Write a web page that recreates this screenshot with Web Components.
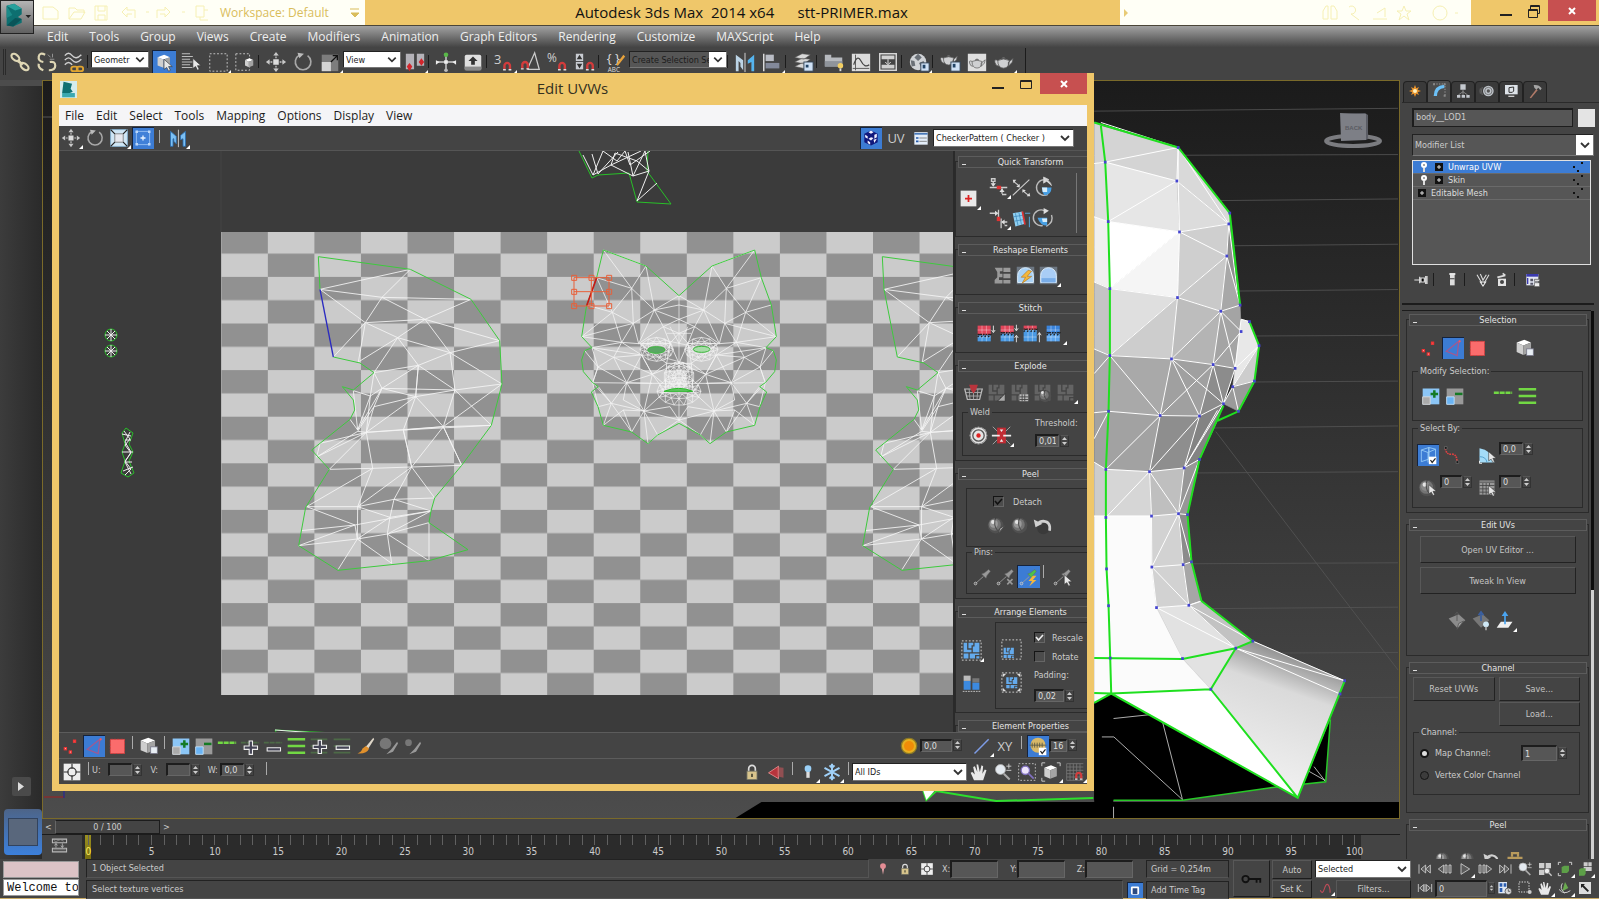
<!DOCTYPE html>
<html lang="en">
<head>
<meta charset="utf-8">
<title>Autodesk 3ds Max 2014 x64</title>
<style>
  body { margin: 0; background: #444; }
</style>
</head>
<body>
<max-app></max-app>
<script>
/** Shared rules, put in front of each element's own styles. */
const BASE = `
  *, *::before { box-sizing: border-box; }
  button, input, select { font: inherit; color: inherit; margin: 0; padding: 0; border: 0; background: none; border-radius: 0; }
  svg { display: block; }
  .row { display: flex; align-items: center; }
  .push { margin-left: auto; }
`;

function define(tag, css, html, setup) {
  customElements.define(tag, class extends HTMLElement {
    connectedCallback() {
      if (this.shadowRoot) return;
      const root = this.attachShadow({ mode: 'open' });
      root.innerHTML = `<style>${BASE}${css}</style>${typeof html === 'function' ? html(this) : html}`;
      if (setup) setup(this, root);
    }
  });
}

/* ---------- icons, all on a 24 x 24 grid ---------- */

const cursor = (x, y) => `<path transform="translate(${x} ${y})" d="M0 0v11l3-2 2 4 2-1-2-4h4z" fill="#e8e8e8" stroke="#333" stroke-width=".7"/>`;
const magnet = (x, y) => `<g transform="translate(${x} ${y})" fill="none"><path d="M1.500 8V4a3 3 0 0 1 6 0v4" stroke="#d23c3c" stroke-width="2.600"/><path d="M0 8.500h3M6 8.500h3" stroke="#ddd" stroke-width="1.600"/></g>`;
const teapot = (x, y, s) => `<g transform="translate(${x} ${y}) scale(${s})"><path d="M4 6q0 8 6 8t6-8q-6-3-12 0zM15 8l5-4-1 4-4 4zM4 6Q0 4 1 8t4 4M8 4q2-2 4 0z" fill="#cfd0d2" stroke="#555" stroke-width=".8"/></g>`;
const cube = (x, y, s = 1) => `<g transform="translate(${x} ${y}) scale(${s})"><path d="M0 3l8-3 7 3-8 3z" fill="#fff"/><path d="M0 3l7 3v10l-7-3z" fill="#cfcfcf"/><path d="M7 6l8-3v10l-8 3z" fill="#a4a4a4"/></g>`;
const sphere = (x, y, r, c = '#9a9a9a') => `<circle cx="${x}" cy="${y}" r="${r}" fill="#505050"/><circle cx="${x - 1}" cy="${y - 1}" r="${r - 2}" fill="#747474"/><circle cx="${x - 2}" cy="${y - 2}" r="${r - 4.5}" fill="${c}"/><circle cx="${x - 3}" cy="${y - 4}" r="${r / 4}" fill="#e4e4e4"/><path d="M${x} ${y - r}q-3 ${r} 2 ${r * 1.6}" stroke="#3a3a3a" fill="none"/>`;
const blocks = (x, y, s, c) => `<g transform="translate(${x} ${y}) scale(${s})" fill="${c}"><path d="M0 0h4v8h5v3H0zM5.500 0H11v3H9v3.500H5.500zM12.500 0H18v11h-7.500V4.500h2zM0 12.500h5.500V18H0zM7 12.500h11V14h-5v4H7zM14.500 15.500H18V18h-3.500z"/></g>`;
const stitch = (top, bottom, split, arrow) => `<path d="M3 3h15v${split - 3}H3z" fill="${top}"/><path d="M3 ${split}h15v${21 - split}H3z" fill="${bottom}"/>
  <path d="M8 3v18M13 3v18M3 8h15M3 16h15" stroke="#ffffff66"/><path d="M3 ${split + 2}l3-3M7 ${split + 2}l3-3M11 ${split + 2}l3-3M15 ${split + 2}l3-3M3 ${split - 1}h16" stroke="#222" stroke-width="1.400" stroke-dasharray="2 1"/>
  <path d="${arrow}" fill="none" stroke="#eee"/>`;
const pin = (c) => `<path d="M4 20L13 12" stroke="#999" fill="none"/><path d="M11 9l3-1 5-4 2 2-4 5-1 3z" fill="${c}" stroke="#666" stroke-width=".6"/><circle cx="4" cy="20" r="1.500" fill="none" stroke="#ccc"/>`;
const transport = (d) => `<path d="${d}" fill="#5a5a5a" stroke="#d8d8d8" stroke-width="1.200"/>`;

const ICONS = {
  link: `<g fill="none" stroke="#ded6b4" stroke-width="2.400"><ellipse cx="7" cy="7" rx="5" ry="3" transform="rotate(40 7 7)"/><path d="M9 10l6 5" stroke-width="3"/><ellipse cx="17" cy="17" rx="5" ry="3" transform="rotate(40 17 17)"/></g>`,
  unlink: `<g fill="none" stroke="#ded6b4" stroke-width="2.400"><path d="M10 4Q4 1 3 6t5 6M14 21q7 0 7-5t-6-4M3 14q-1 5 5 7"/></g><path d="M13 4l3 3M18 3v4M15 9h5" stroke="#999"/>`,
  waves: `<g fill="none" stroke="#cfcfcf" stroke-width="1.600"><path d="M2 5q4-5 8 0t10-1M2 10q4-5 8 0t10-1M2 15q4-5 8 0"/></g><g fill="none" stroke="#e0a430" stroke-width="2"><rect x="9" y="17" width="7" height="5" rx="2.500"/><rect x="15" y="17" width="7" height="5" rx="2.500"/></g>`,
  pick: `${cube(5, 4, 0.9)}${cursor(12, 9)}`,
  list: `<path d="M2 3h9M2 6h12M2 9h9M2 12h12M2 15h9M2 18h12" stroke="#bdbdbd" stroke-width="1.300"/>${cursor(14, 8)}`,
  region: `<rect x="3" y="3" width="19" height="19" fill="none" stroke="#ccc" stroke-dasharray="2 2"/>`,
  crossing: `<rect x="2" y="3" width="15" height="18" fill="none" stroke="#ccc" stroke-dasharray="2 2"/>${cube(12, 8, 0.6)}`,
  move: `<path d="M12 3v5M12 16v5M3 12h5M16 12h5" stroke="#c8c8c8" stroke-dasharray="2 1" stroke-width="1.400"/><path d="M12 1l3 4H9zM12 23l3-4H9zM1 12l4-3v6zM23 12l-4-3v6z" fill="#c8c8c8"/><rect x="9" y="9" width="6" height="6" fill="#ddd"/>`,
  rotate: `<path d="M8 4.500A8.500 8.500 0 1 0 17 5" fill="none" stroke="#a8a8a8" stroke-width="1.800"/><path d="M6 2l7 1-5 5z" fill="#bbb"/>`,
  scale: `<path d="M3 4h18v18H3z" fill="#7d7d7d"/><path d="M3 12h10v10H3z" fill="#d4d4d4"/><path d="M13 12l7-7M20 10V5h-5" stroke="#111" fill="none" stroke-width="1.400"/>`,
  pivot: `<path d="M2 3h9v17H2zM14 3h8v13h-8z" fill="#b4b2b8"/><path d="M6 13l3 4-3 5-3-5zM19 8l3 4-3 4-3-4z" fill="#d3262c"/>`,
  manip: `<path d="M12 4v16M3 12h18" stroke="#ccc" stroke-width="1.600"/><circle cx="12" cy="4" r="2.500" fill="#59b948"/><path d="M10 10h4v4h-4zM1 10l4 2-4 3zM23 10l-4 2 4 3z" fill="#eee"/><circle cx="12" cy="21" r="2" fill="#bbb"/>`,
  keys: `<rect x="3" y="4" width="18" height="17" rx="2" fill="#dfdfdf"/><rect x="3" y="17" width="18" height="4" fill="#8b8b8b"/><path d="M12 6l5 5h-3v4h-4v-4H7z" fill="#333"/>`,
  snap: `<text x="1" y="14" font-size="14" fill="#d0d0d0">3</text>${magnet(11, 12)}`,
  angle: `<path d="M8 20L16 2l5 18H8" fill="none" stroke="#ccc" stroke-width="1.400"/>${magnet(1, 11)}`,
  percent: `<text x="0" y="12" font-size="13" fill="#d0d0d0">%</text>${magnet(12, 12)}`,
  spinner: `<rect x="2" y="3" width="8" height="8" fill="#c9ccd2"/><rect x="2" y="12" width="8" height="8" fill="#c9ccd2"/><path d="M6 4l3 5H3zM6 19l3-5H3z" fill="#333"/>${magnet(13, 12)}`,
  named: `<text x="2" y="13" font-size="14" fill="#ddd">{ }</text><text x="3" y="23" font-size="7" fill="#ddd">ABC</text><path d="M12 15l8-11 2 2-8 10z" fill="#e8a33c"/>`,
  mirror: `<path d="M2 4l8 6v11l-3-4v-4l-2-2v11H2z" fill="#bcd4e6"/><path d="M22 4l-7 6v4l4-2v10h3z" fill="#55b4ee"/><path d="M12 2v21" stroke="#ddd"/>`,
  align: `<path d="M3 3v19" stroke="#ddd" stroke-width="1.600"/><path d="M5 4h9v7H5z" fill="#b9bcc4"/><path d="M5 13h15v6H5z" fill="#83899a"/>`,
  layers: `<path d="M3 7l8-4 9 1-7 5zM3 12l8-4 9 1-7 5zM3 17l8-4 9 1-7 5z" fill="#d9d9d9" stroke="#555" stroke-width=".6"/><rect x="13" y="12" width="10" height="10" fill="#cfe1f5" stroke="#345"/><path d="M15 15h3v3h-3z" fill="#246"/>`,
  ribbon: `<path d="M2 4h7v3h12v10H2z" fill="#b6b9be"/><path d="M2 11h19v6H2z" fill="#8f949b"/><circle cx="19" cy="16" r="3" fill="#f3cf62"/><path d="M18 19h2v3h-2z" fill="#ddd"/>`,
  curve: `<rect x="2" y="3" width="20" height="19" fill="#dcdcdc"/><path d="M6 4v17M3 19h18" stroke="#555"/><path d="M4 15q4-12 8-4t9 4" fill="none" stroke="#444" stroke-width="1.300"/>`,
  schematic: `<rect x="3" y="3" width="18" height="18" fill="#454545" stroke="#d8d8d8" stroke-width="1.600"/><path d="M5 5h14v4H5zM5 15h14v4H5z" fill="#d0d0d0"/><path d="M12 9v5M9 12l3 3 3-3" stroke="#eee" fill="none"/>`,
  material: `<circle cx="11" cy="12" r="9" fill="#d0d3d7"/><path d="M11 3l4 4-4 4-4-4zM3 10l4 1 1 5-4 1zM12 13l5-2 2 5-4 3z" fill="#6a7077"/><rect x="14" y="13" width="9" height="9" fill="#cfe1f5" stroke="#345"/><path d="M16 15h3v4h-3z" fill="#246"/>`,
  rsetup: `${teapot(1, 2, 0.95)}<rect x="13" y="12" width="10" height="10" fill="#cfe1f5" stroke="#345"/><path d="M15 14h3v4h-3z" fill="#246"/>`,
  rframe: `<rect x="2" y="3" width="20" height="19" fill="#dedede"/>${teapot(3, 6, 0.9)}`,
  render: teapot(1, 4, 1.05),
  mirror2: `<path d="M3 4l7 6v9l-3-3v-3l-1 0v9H3z" fill="#7cc0f4" stroke="#2a6db0"/><path d="M21 4l-6 5v5l3-1v9h3z" fill="#7cc0f4" stroke="#2a6db0"/><path d="M12.500 2v21" stroke="#ddd"/>`,
  scaleb: `<rect x="2" y="2" width="20" height="20" fill="#cfe6f5" stroke="#8ab8d8"/><rect x="7" y="7" width="10" height="10" fill="#e6e8ee" stroke="#777"/><path d="M2 2l5 5M22 2l-5 5M2 22l5-5M22 22l-5-5" stroke="#222" stroke-width="1.500"/>`,
  freeform: `<rect x="4" y="4" width="16" height="16" fill="#4080d8" stroke="#9cc4f6"/><path d="M3 3h3v3H3zM18 3h3v3h-3zM3 18h3v3H3zM18 18h3v3h-3z" fill="#bcd8fa"/><path d="M12 9v6M9 12h6" stroke="#e8f2ff" stroke-width="1.600"/>`,
  checker: `<path d="M4 7l8-4 8 4v10l-8 4-8-4z" fill="#10187c"/><path d="M9 5l3 2 3-2-3-2zM5 8l3 2v3l-3-2zM12 11l3 1-3 3-3-2zM16 8l3-1v4l-3 2zM8 15l3 2v3l-3-2zM15 14l4-1-3 5z" fill="#f0f0ff"/>`,
  props: `<rect x="4" y="5" width="16" height="15" fill="#e4eefa"/><path d="M4 7h16" stroke="#4878b8" stroke-width="2"/><path d="M6 12h3M6 16h3" stroke="#2458a8" stroke-width="2"/><path d="M10 12h9M10 16h9" stroke="#777"/>`,
  center: `<rect x="3" y="3" width="18" height="18" fill="#e8e8e8"/><path d="M12 8v8M8 12h8" stroke="#d22" stroke-width="2"/>`,
  alignv: `<path d="M4 2h4v3H4zM6 5v5M2 12h20M16 13v6M16 20h5" stroke="#ccc" stroke-width="1.500" fill="none"/><path d="M6 11l-3-4h6zM16 13l3 4h-6z" fill="#ddd"/><path d="M10 10h5v4h-5z" fill="#d33"/>`,
  alignh: `<path d="M12 2v10M15 12v11M2 6h7M22 16h-6M19 20h3" stroke="#ccc" stroke-width="1.500"/><path d="M12 6L8 3v6zM15 16l4-3v6z" fill="#ddd"/><path d="M10 10h4v5h-4z" fill="#d33"/>`,
  linear: `<path d="M2 21L21 3M3 5l6 5M14 16l6 5" stroke="#ccc" stroke-width="1.300"/><path d="M2 3h4L3 7zM22 22h-4l3-4zM10 12V8L6 11zM13 14v4l4-3z" fill="#ddd"/>`,
  rotcw: `<path d="M12 3a9 9 0 1 0 4 17" fill="none" stroke="#bbb" stroke-width="1.600"/><path d="M11 0l6 3-6 4zM12 3a9 9 0 0 1 8 7" fill="#ddd" stroke="#ccc"/><path d="M9 12h11q0 8-8 9-3-4-3-9z" fill="#48a0e4"/><path d="M9 12h6v5h-5z" fill="#d8eefb"/>`,
  rotccw: `<path d="M12 3a9 9 0 1 0-2 17M20 8q3 8-6 13" fill="none" stroke="#bbb" stroke-width="1.600"/><path d="M11 0l6 3-6 4z" fill="#ddd"/><path d="M4 11h11v9q-8 0-11-9z" fill="#48a0e4"/><path d="M9 12h6v4h-5z" fill="#d8eefb"/>`,
  edgealign: `<path d="M2 6l11-2 3 14-11 3z" fill="#8fd0f2"/><path d="M5 6l3 14M9 5l3 14M3 10l12-2M4 15l12-2" stroke="#3a84b8" stroke-width=".8"/><path d="M13 4l3 15" stroke="#d33" stroke-width="2"/><path d="M16 6h6M21 10v12" stroke="#5ab4ee"/>`,
  spaceh: `<path d="M8 6L3 9l5 3zM8 8h16v2H8zM6 15h2v2H6zM10 15h2v2h-2zM14 15h3v2h-3z" fill="#ccc"/>`,
  spacev: `<path d="M9 2h3v3H9zM9 8h3v2H9zM9 13h3v2H9zM9 18h3v3H9z" fill="#ccc"/>`,
  straighten: `<path d="M3 3h9v4H9v3h3v4H8v3h4v4H3v-4l3-3V8zM13 3h8v5h-8zM13 10h8v5h-8zM13 17h8v4h-8z" fill="#999"/>`,
  relaxl: `<rect x="2" y="2" width="20" height="20" fill="#6d7782"/><path d="M3 20V12a9 9 0 0 1 18 0v8z" fill="#a9d2f6" stroke="#e4f2fd"/><path d="M15 6l-8 8h5l-4 7 11-8h-5l5-6z" fill="#f4b73c" stroke="#a86a10" stroke-width=".6"/>`,
  relax: `<rect x="2" y="2" width="20" height="20" fill="#6d7782"/><path d="M3 20V12a9 9 0 0 1 18 0v8z" fill="#a9cdf6" stroke="#e4f2fd"/><path d="M4 15h16v5H4z" fill="#79ade8"/>`,
  st1: stitch('#e0465a', '#4a9ae4', 14, 'M21 3v7M19 8l2 3 2-3'),
  st2: stitch('#e0465a', '#4a9ae4', 12, 'M21 2v6M19 6l2 3 2-3M21 22v-7M19 17l2-3 2 3'),
  st3: stitch('#e0465a', '#4a9ae4', 8, 'M21 22V11M19 14l2-3 2 3'),
  st4: stitch('#3a84dc', '#5aa4ee', 12, 'M0 0'),
  basket: `<path d="M2 8h20l-3 12H5z" fill="none" stroke="#bbb" stroke-width="1.400"/><path d="M7 8l1 12M12 8v12M17 8l-1 12M3 12h18M4 16h16" stroke="#aaa"/><path d="M7 3h10l-2 6-3 4-3-4z" fill="#b8343c"/>`,
  ex1: blocks(3, 3, 1, '#646464') + `<path d="M22 13v9h-9z" fill="#aaa" stroke="#333"/>`,
  ex2: blocks(3, 3, 1, '#646464') + `<path d="M12 14h10v8H12z" fill="#bbb"/><path d="M15 14v8M18 14v8M12 17h10M12 20h10" stroke="#444"/>`,
  ex3: blocks(3, 3, 1, '#646464') + sphere(15, 16, 7),
  ex4: blocks(3, 3, 1, '#646464'),
  target: `<circle cx="12" cy="12" r="10" fill="#e4e4e4"/><circle cx="12" cy="12" r="6.500" fill="none" stroke="#555" stroke-width="1.500"/><circle cx="12" cy="12" r="9.500" fill="none" stroke="#777"/><circle cx="12" cy="12" r="2.500" fill="#d22"/>`,
  weld: `<path d="M2 2l20 20M22 2L2 22" stroke="#aaa"/><path d="M7 3h10v18H7z" fill="#c22c34"/><path d="M10 5l2 3 2-3M10 19l2-3 2 3" fill="#eee"/><path d="M1 12h9M23 12h-9" stroke="#eee" stroke-width="2"/>`,
  peel1: sphere(11, 12, 9) + `<path d="M22 12l-8 9 2-6z" fill="#aaa" stroke="#444"/>`,
  peel2: sphere(12, 12, 9),
  undo: `<circle cx="13" cy="15" r="7" fill="#3a3a3a"/><path d="M20 18q2-10-7-11-4 0-6 3" fill="none" stroke="#d0d0d0" stroke-width="3"/><path d="M2 5l2 9 8-4z" fill="#d0d0d0"/>`,
  pin: pin('#999'),
  pinx: pin('#999') + `<path d="M14 15l6 6M20 15l-6 6" stroke="#999" stroke-width="1.800"/>`,
  pinauto: pin('#4cc24a') + `<path d="M17 11l-5 6h4l-3 6 8-7h-4l4-5z" fill="#f6b83c"/>`,
  pinsel: pin('#999') + cursor(14, 10),
  pack: `<rect x="1" y="1" width="22" height="22" fill="none" stroke="#ddd" stroke-dasharray="2 2"/>${blocks(3, 3, 1, '#64aaec')}`,
  packsmall: `<rect x="1" y="1" width="22" height="22" fill="none" stroke="#ddd" stroke-dasharray="2 2"/>${blocks(3, 10, 0.65, '#64aaec')}`,
  packfit: `<rect x="1" y="1" width="22" height="22" fill="none" stroke="#ddd" stroke-dasharray="2 2"/>${blocks(6, 6, 0.7, '#64aaec')}<path d="M2 2h4L2 6zM22 2h-4l4 4zM2 22h4l-4-4zM22 22h-4l4-4z" fill="#ddd"/>`,
  cabinets: `<path d="M3 3h8v6H3z" fill="#bbb"/><path d="M13 6h8v5h-8z" fill="#777"/><path d="M3 9h8v10H3zM13 11h8v8h-8z" fill="#3c8ae0"/><path d="M2 21h21" stroke="#ccc" stroke-dasharray="2 1"/>`,
  points: `<g fill="#fff" stroke="#e33" stroke-width="1.500"><rect x="4" y="14" width="2.500" height="2.500"/><rect x="10" y="18" width="2.500" height="2.500"/><rect x="15" y="5" width="2.500" height="2.500"/></g>`,
  edge: `<path d="M19 4L4 16l13 5z" fill="none" stroke="#a05a90" stroke-width="1.600"/><circle cx="20" cy="4" r="1.300" fill="#f55"/>`,
  face: `<rect x="4" y="4" width="17" height="17" fill="#fb6c6c" stroke="#e03c3c" stroke-dasharray="3 1"/>`,
  element: `${cube(2, 2, 1.15)}<rect x="14" y="13" width="8" height="8" fill="#e8eef4" stroke="#778"/>`,
  grow: `<rect x="2" y="3" width="20" height="19" fill="#8cc6f6"/><path d="M2 13h9v9H2z" fill="#aaa" stroke="#ddd"/><path d="M16 5v9M11.500 9.500h9" stroke="#147a24" stroke-width="3"/>`,
  shrink: `<rect x="2" y="3" width="20" height="19" fill="#9a9a9a"/><path d="M2 13h9v9H2z" fill="#6ab4f4" stroke="#c8e4fb"/><path d="M12 9.500h9" stroke="#147a24" stroke-width="3"/>`,
  loop: `<path d="M1 8h22" stroke="#72d844" stroke-width="3" stroke-dasharray="6 1"/>`,
  loopadd: `<path d="M1 8h22" stroke="#4d6a47" stroke-width="2" stroke-dasharray="6 1"/><path d="M11 6h4v6h6v4h-6v6h-4v-6H5v-4h6z" fill="#445" stroke="#eee" stroke-width="1.300"/>`,
  loopsub: `<path d="M1 8h22" stroke="#4d6a47" stroke-width="2" stroke-dasharray="6 1"/><path d="M5 14h16v4H5z" fill="#445" stroke="#eee" stroke-width="1.300"/>`,
  ring: `<path d="M2 4h21M2 12h21M2 20h21" stroke="#72d844" stroke-width="3"/>`,
  ringadd: `<path d="M2 4h20M2 12h20M2 20h20" stroke="#4d6a47" stroke-width="2"/><path d="M11 5h4v6h6v4h-6v6h-4v-6H5v-4h6z" fill="#445" stroke="#eee" stroke-width="1.300"/>`,
  ringsub: `<path d="M2 4h20M2 12h20M2 20h20" stroke="#4d6a47" stroke-width="2"/><path d="M5 12h16v4H5z" fill="#445" stroke="#eee" stroke-width="1.300"/>`,
  brush: `<path d="M22 2l-9 11 3 2 7-11z" fill="#ded6c8"/><path d="M13 12l4 3q-3 7-14 6 5-2 6-6z" fill="#e0902c"/>`,
  brushbig: `<circle cx="9" cy="9" r="7" fill="#777"/><path d="M23 7l-7 9-6 6 8-3 6-10z" fill="#999"/>`,
  brushsmall: `<circle cx="9" cy="8" r="4" fill="#777"/><path d="M23 7l-7 9-6 6 8-3 6-10z" fill="#999"/>`,
  falloff: `<circle cx="12" cy="12" r="10" fill="#8a7a28"/><circle cx="12" cy="12" r="8.500" fill="#e8b020"/><circle cx="12" cy="12" r="6" fill="#f08c08"/>`,
  line: `<path d="M3 21L20 4" stroke="#7d9ce6" stroke-width="1.800"/>`,
  soft: `<circle cx="12" cy="11" r="9" fill="#d8b868"/><path d="M2 11h20M5 8v6M8 8v6M11 8v6M14 8v6M17 8v6" stroke="#554"/><rect x="13" y="14" width="9" height="9" fill="#fff"/><path d="M15 18l2 3 4-5" stroke="#222" fill="none" stroke-width="1.500"/>`,
  absolute: `<rect x="2" y="2" width="20" height="20" fill="#eee"/><circle cx="12" cy="12" r="5" fill="#eee" stroke="#333" stroke-width="1.400"/><path d="M12 2v6M12 16v6M2 12h6M16 12h6" stroke="#333" stroke-width="1.400"/>`,
  lock: `<path d="M8 12V8a4 4 0 0 1 8 0v4" fill="none" stroke="#ddd" stroke-width="2"/><rect x="6" y="11" width="12" height="10" fill="#d8c48c" stroke="#776"/><path d="M12 14v4" stroke="#443" stroke-width="2"/>`,
  filter: `<path d="M3 13l12-8v15z" fill="#b8343c" stroke="#e89090"/><path d="M13 6l8 1v12l-8-2z" fill="#c4565c" opacity=".6"/>`,
  bulbs: `<circle cx="12" cy="8" r="4" fill="#9ad0f6"/><path d="M10 12h4v7h-4z" fill="#ddd"/>`,
  freeze: `<path d="M12 2v20M3 7l18 10M21 7L3 17M9 4l3 3 3-3M9 20l3-3 3 3" stroke="#9fd0f8" stroke-width="2.400" fill="none"/>`,
  hand: `<path d="M6 22L2 13l2-1 3 3-2-9 2-1 3 7-1-9h2l2 9 2-8 2 1-1 9 3-5 2 1-4 12z" fill="#e8e8e8"/>`,
  zoom: `<circle cx="9" cy="9" r="6" fill="#e4eaf0" stroke="#aaa"/><path d="M13 14l7 7" stroke="#aaa" stroke-width="2.500"/><path d="M19 2v6M16 5h6M16 10h6" stroke="#ddd"/>`,
  zoomreg: `<rect x="2" y="2" width="20" height="20" fill="none" stroke="#ccc" stroke-dasharray="2 2"/><circle cx="10" cy="10" r="5" fill="#ece4fb" stroke="#8070c0" stroke-width="1.600"/><path d="M14 14l6 6" stroke="#8070c0" stroke-width="2"/>`,
  zoomext: `${cube(4, 4)}<path d="M1 5V1h4M19 1h4v4M1 19v4h4" stroke="#ddd" fill="none"/>`,
  gridsnap: `<path d="M2 2v20M6 2v20M10 2v20M14 2v20M18 2v20M2 2h20M2 6h20M2 10h20M2 14h20M2 18h20M2 22h20" stroke="#777"/>${magnet(12, 12)}`,
  create: `<path d="M12 3l2 5 4-2-2 4 5 2-5 2 2 4-4-2-2 5-2-5-4 2 2-4-5-2 5-2-2-4 4 2z" fill="#e8932c"/><circle cx="12" cy="12" r="3" fill="#fff3c0"/>`,
  modify: `<path d="M4 21Q4 5 20 4v5Q9 10 9 21z" fill="#6cc0f6"/><path d="M4 3h17v18" fill="none" stroke="#bbb" stroke-dasharray="2 2"/><path d="M3 2h3v3H3zM19 2h3v3h-3zM19 19h3v3h-3z" fill="#888"/>`,
  hierarchy: `<path d="M8 2h8v8H8zM3 18h5v4H3zM10 18h5v4h-5zM17 18h5v4h-5z" fill="#c4c8ce"/><path d="M12 10v8M12 13L5 18M12 13l7 5" stroke="#aaa"/>`,
  motion: `<circle cx="14" cy="12" r="8" fill="#bfc4ca"/><circle cx="14" cy="12" r="5.500" fill="none" stroke="#555"/><circle cx="14" cy="12" r="2.500" fill="#555"/><path d="M5 6q-3 6 0 12M2 8q-1 4 0 8" stroke="#777" fill="none"/>`,
  display: `<rect x="3" y="3" width="19" height="14" fill="#dde2e8"/><path d="M9 7l7-1v6l-2 2H9z" fill="none" stroke="#333" stroke-width="1.500"/><path d="M8 19h9v2H8z" fill="#ccc"/>`,
  hammer: `<path d="M4 22L14 9l2 2L6 23z" fill="#b07a68"/><path d="M10 3q8-1 12 5l-2 3-3-4-3 3-3-3z" fill="#a4a4a4"/>`,
  pinstack: `<path d="M2 12h8M10 7v10M12 9h5v6h-5zM19 6v12M21 6v12" stroke="#ddd" stroke-width="1.800"/>`,
  tube: `<path d="M9 4h7v16H9z" fill="#ddd"/><path d="M8 3h9" stroke="#fff" stroke-width="2.500"/><path d="M9 9h7v2H9z" fill="#666"/>`,
  unique: `<path d="M3 4l7 12M21 4l-7 12M8 3l4 9 5-8" stroke="#ddd" stroke-width="1.600" fill="none"/><path d="M8 15h8l-4 6z" fill="none" stroke="#eee" stroke-width="1.600"/>`,
  trash: `<path d="M6 10h12v11H6z" fill="#e4e4e4"/><path d="M5 8l12-3M13 2l4 3" stroke="#ddd" stroke-width="2.500"/><circle cx="12" cy="15" r="3" fill="#444"/>`,
  config: `<rect x="2" y="3" width="18" height="17" fill="#e4e8f4"/><path d="M2 5h18" stroke="#3a3ab0" stroke-width="4"/><path d="M4 9v9" stroke="#3a3ab0" stroke-width="2"/><path d="M8 10h4v4H8zM8 16h4v3H8z" fill="#556"/><path d="M14 11h8v3h-8zM14 16h8v6h-8z" fill="#eee" stroke="#444"/>`,
  byelem: `<path d="M4 6l9-3v14l-9 3zM13 3l8 2v13l-8-1z" fill="none" stroke="#9cd0f8"/><path d="M4 6l8 3v12M12 9l9-4" stroke="#9cd0f8" fill="none"/><rect x="13" y="14" width="9" height="9" fill="#fff"/><path d="M15 18l2 3 4-5" stroke="#222" fill="none" stroke-width="1.500"/>`,
  redline: `<path d="M4 4q1 8 8 7 6 0 6 9" fill="none" stroke="#e04040" stroke-width="2" stroke-dasharray="2 1"/><path d="M3 2h3v3H3zM17 19h3v3h-3z" fill="#111" stroke="#999" stroke-width=".5"/>`,
  planar: `<path d="M3 21V4q14 2 18 17z" fill="#a4dcf8"/><path d="M3 14q8 0 9 7" fill="none" stroke="#4898c8"/><path d="M3 19v3h3" stroke="#fff" fill="none"/>${cursor(14, 8)}`,
  smooth: sphere(11, 12, 10, '#888') + cursor(13, 8),
  matid: `<path d="M3 3h18v17H3z" fill="#999"/><path d="M3 5h18M3 9h18M3 13h18M3 17h18M7 6v14M11 6v14M15 6v14" stroke="#444"/>${cursor(14, 9)}`,
  quick1: `<path d="M2 9l12-5 8 7-10 9z" fill="#8c8c8c"/><path d="M12 12V2M9 5l3-4 3 4" stroke="#555" fill="none"/><path d="M20 12l-8 10 2-7z" fill="#aaa" stroke="#555"/>`,
  quick2: `<path d="M2 9l12-5 8 7-10 9z" fill="#777"/><path d="M12 12V2M9 5l3-4 3 4" stroke="#3a5fa0" fill="none" stroke-width="2"/><circle cx="18" cy="16" r="3.500" fill="#cfe8f6"/><path d="M17 19h2v4h-2z" fill="#aaa"/>`,
  quick3: `<path d="M2 20l5-7h14l-5 7z" fill="#f0f0f0"/><path d="M12 16V4" stroke="#4aa4f0" stroke-width="2"/><path d="M12 0l4 6H8z" fill="#4aa4f0"/>`,
  pelt: `<path d="M2 9h20v6H2z" fill="#b89a5c"/><path d="M8 9V4h8v5" fill="none" stroke="#b89a5c" stroke-width="3"/>`,
  first: transport('M3 5v14M6 12l7-6v12zM13 12l7-6v12z'),
  prev: transport('M2 12l8-6v12zM12 6h3v12h-3zM18 6h3v12h-3z'),
  play: transport('M6 4l13 8-13 8z'),
  next: transport('M22 12l-8-6v12zM9 6h3v12H9zM3 6h3v12H3z'),
  last: transport('M21 5v14M18 12l-7-6v12zM11 12L4 6v12z'),
  keymode: transport('M2 6v12M22 6v12M4 12l6-5v10zM20 12l-6-5v10zM12 6v12'),
  zoomall: `<path d="M3 3h8v8H3zM13 3h8v8h-8zM3 13h8v8H3z" fill="#ccc"/><circle cx="15" cy="15" r="4" fill="#eee" stroke="#777"/><path d="M18 18l4 4" stroke="#ccc" stroke-width="2"/>`,
  ext: `<path d="M2 6V2h4M18 2h4v4M2 18v4h4" stroke="#ccc" fill="none" stroke-width="1.500"/><path d="M7 9l4-2h7v8l-3 3H7z" fill="#5da048"/>`,
  extall: `<path d="M10 2h6v6h-6zM17 2h5v6h-5zM10 9h12v6H10z" fill="#ccc"/><path d="M3 13l3-2h7v8l-2 3H3z" fill="#5da048"/>`,
  timecfg: `<rect x="2" y="3" width="13" height="17" fill="#dfe8f4"/><path d="M4 5h4v5H4zM10 5h4v5h-4zM4 12h4v6H4z" fill="#2a5cb0"/><circle cx="17" cy="17" r="5" fill="#d8d8d8" stroke="#333"/><path d="M17 14v3h3" stroke="#333" fill="none"/>`,
  regionz: `<path d="M3 3h15v15H3z" fill="none" stroke="#ddd" stroke-dasharray="2 2" stroke-width="1.500"/><circle cx="19" cy="18" r="3" fill="#ccc"/>`,
  orbit: `<path d="M12 3l5 9-9 5z" fill="#6aaa50"/><path d="M3 14q7 9 17 2M8 5q-5 8 4 15" stroke="#ccc" fill="none" stroke-width="1.500"/>`,
  maximize: `<rect x="3" y="3" width="18" height="18" fill="#ddd"/><path d="M6 6h6l-2 2 8 8-2 2-8-8-2 2z" fill="#222"/>`,
  redpin: `<circle cx="12" cy="7" r="5" fill="#e48c94"/><path d="M10 11h4l-2 11z" fill="#e4a4a8"/>`,
  timetag: `<rect x="5" y="6" width="14" height="14" rx="2" fill="#fff"/><rect x="8" y="9" width="8" height="10" fill="#2c4a80"/>`,
  key: `<g fill="none" stroke="#111" stroke-width="2"><circle cx="5" cy="12" r="3.500"/><path d="M8 12h14M17 12v4M21 12v4"/></g>`,
  redcurve: `<path d="M2 16q4 8 7-2t6-8q4 3 4 14" fill="none" stroke="#c04c58" stroke-width="1.800"/>`,
  trackcfg: `<path d="M2 3h20v5H2zM2 16h20v5H2z" fill="none" stroke="#bbb" stroke-width="1.500"/><path d="M7 15v-5M5 12l2-3 2 3M16 9v5M14 12l2 3 2-3" stroke="#ccc" fill="none"/><path d="M4 5q3 3 6 0t8 1M3 18h18" stroke="#999" fill="none"/>`
};

define('ui-icon', `
  :host { display: block; width: 24px; height: 24px; }
  svg { width: 100%; height: 100%; overflow: visible; font-family: "Open Sans", sans-serif; }
`, el => `<svg viewBox="0 0 24 24" aria-hidden="true">${ICONS[el.getAttribute('name')] || ''}</svg>`);

/** <tool-button icon="move" fly active> - a flat icon button; "fly" adds the flyout corner. */
define('tool-button', `
  :host { display: flex; justify-content: center; flex: none; width: var(--cell, 24px); }
  button { position: relative; flex: none; width: var(--box, 22px); height: var(--box, 22px); padding: 1px; color: #c8c8c8; }
  :host([active]) button { background: #3c7cd4; box-shadow: inset 1px 1px #15233c; }
  :host([fly]) button::before { content: ""; position: absolute; right: -1px; bottom: 0; border: 2px solid transparent; border-right-color: #fff; border-bottom-color: #fff; }
  ui-icon { width: 100%; height: 100%; }
`, el => `<button type="button" aria-label="${el.getAttribute('icon')}"><ui-icon name="${el.getAttribute('icon')}"></ui-icon></button>`);

define('tool-sep', `
  :host { display: block; flex: none; width: 4px; height: 13px; border-left: 1px solid var(--sep, #1c1c1c); }
`, '');

/** <drop-down value="View" label="..."> */
define('drop-down', `
  :host { display: block; flex: none; }
  .box { position: relative; height: 100%; background: var(--field, #fff); color: var(--ink, #222); border: 1px solid #222; border-right-color: #777; border-bottom-color: #777; }
  select { appearance: none; width: 100%; height: 100%; padding: 0 16px 0 2px; overflow: hidden; display: block; }
  svg { position: absolute; right: 0; top: 0; width: 17px; height: 100%; background: #fff; pointer-events: none; }
`, el => `<div class="box"><select aria-label="${el.getAttribute('label')}"><option>${el.getAttribute('value')}</option></select>
  <svg viewBox="0 0 17 16"><path d="M5 6l4 4 4-4" fill="none" stroke="#333" stroke-width="1.800"/></svg></div>`);

/** <spin-box value="0">Label</spin-box> */
define('spin-box', `
  :host { display: flex; align-items: center; flex: none; }
  label { display: contents; }
  input { width: var(--w, 24px); height: var(--h, 13px); padding: 0 2px; color: #ddd; background: #565656; border: 1px solid #1d1d1d; border-width: 2px 1px 1px 2px; border-bottom-color: #666; border-right-color: #666; }
  svg { width: 9px; height: 12px; margin-left: 1px; border: 1px solid #333; border-top-color: #555; }
  :host([plain]) svg { display: none; }
`, el => `<label><slot></slot><input value="${el.getAttribute('value') || ''}" aria-label="${el.getAttribute('label') || 'value'}"></label>
  <svg viewBox="0 0 7 10"><path d="M3.500 1L6 4H1zM3.500 9L6 6H1z" fill="#ccc"/></svg>`);

/** <roll-out heading="Peel"> - collapsible panel section. */
define('roll-out', `
  :host { display: block; margin-bottom: var(--gap, 7px); flex: none; }
  button { position: relative; display: block; width: calc(100% - 5px); margin-left: 3px; height: 12px; line-height: 10px; color: #e4e4e4; background: #444; border: 1px solid #5c5c5c; text-align: center; }
  button i { position: absolute; left: 3px; bottom: 2px; width: 4px; border-bottom: 1px solid #ddd; }
  .body { margin-top: -7px; padding-top: 7px; border: 1px solid #2b2b2b; }
`, el => `<button type="button"><i></i>${el.getAttribute('heading')}</button><div class="body"><slot></slot></div>`);

define('group-box', `
  :host { display: block; }
  fieldset { margin: 0; padding: 0; border: 1px solid #2b2b2b; min-width: 0; }
  legend { margin-left: 5px; padding: 0 2px; line-height: 10px; height: 10px; color: #ccc; }
`, el => `<fieldset>${el.hasAttribute('heading') ? `<legend>${el.getAttribute('heading')}</legend>` : ''}<slot></slot></fieldset>`);

define('check-box', `
  :host { display: block; }
  label { display: flex; align-items: center; gap: var(--gap, 8px); color: #ccc; }
  input { appearance: none; width: 11px; height: 11px; background: #4c4c4c; border: 1px solid #666; border-top-color: #151515; border-left-color: #151515; display: block; }
  input[type=radio] { border-radius: 50%; width: 9px; height: 9px; background: #3c3c3c; border-color: #151515; }
  input[type=radio]:checked { background: #ddd; border-width: 2px; }
  span { position: relative; }
  svg { position: absolute; left: 0; top: 0; width: 11px; height: 11px; pointer-events: none; }
`, el => {
  const type = el.getAttribute('type') || 'checkbox', on = el.hasAttribute('checked');
  return `<label><span><input type="${type}" ${on ? 'checked' : ''}>${on && type === 'checkbox' ? `<svg viewBox="0 0 11 11"><path d="M2 5l2.500 3L9 3" fill="none" stroke="${el.getAttribute('ink') || '#eee'}" stroke-width="1.600"/></svg>` : ''}</span><slot></slot></label>`;
});

define('menu-bar', `
  :host { display: block; }
  nav { display: flex; align-items: center; gap: var(--menu-gap, 20px); height: 100%; }
  a { color: inherit; text-decoration: none; }
`, el => `<nav>${el.getAttribute('items').split(',').map(t => `<a href="#">${t}</a>`).join('')}</nav>`);

define('caption-buttons', `
  :host { display: flex; align-items: flex-start; }
  button { width: 28px; height: 21px; display: grid; place-items: center; }
  button:last-child { width: var(--close, 48px); background: #c75050; }
  svg { width: 14px; height: 14px; }
`, el => `
  <button type="button" aria-label="Minimize"><svg viewBox="0 0 14 14"><path d="M1 11h12" stroke="#222" stroke-width="2"/></svg></button>
  <button type="button" aria-label="Restore"><svg viewBox="0 0 14 14" fill="none" stroke="#222">${el.hasAttribute('maximized')
    ? '<path d="M1.500 5.500h9v8h-9zM1 6.500h10M3.500 5V1.500h9v8H11M3 2.500h10"/>'
    : '<path d="M1.500 3.500h11v8h-11zM1 4.500h12"/>'}</svg></button>
  <button type="button" aria-label="Close"><svg viewBox="0 0 14 14"><path d="M4 4l6 6M10 4l-6 6" stroke="#fff" stroke-width="2"/></svg></button>`);

/* ---------- main window bars ---------- */

define('title-bar', `
  :host { display: flex; height: 26px; background: #efc76a; border-bottom: 1px solid #4a4538; font: 15px "Open Sans", sans-serif; color: #111; }
  .app { width: 34px; height: 34px; z-index: 1; background: linear-gradient(#b4b4b4, #606060); border: 1px solid #222; display: flex; align-items: center; }
  .app svg { width: 100%; height: 100%; }
  .quick { display: flex; align-items: center; width: 331px; padding: 0 4px; background: #fffff6; }
  .quick svg, .info svg { height: 20px; width: 170px; fill: none; stroke: #f6f0b4; }
  .quick span { font-size: 12px; color: #d9bd5c; margin-left: 12px; }
  h1 { flex: 1; margin: 0; font-size: 15px; font-weight: 400; line-height: 24px; text-align: center; white-space: pre; padding-right: 2px; }
  .info { display: flex; width: 351px; align-items: center; justify-content: flex-end; background: #fffff6; }
  .info i { margin-right: auto; margin-left: 4px; border: 4px solid transparent; border-left-color: #e8cb76; }
  .info svg { width: 150px; margin-right: 8px; }
  caption-buttons { margin: 0 3px 0 21px; }
`, `
  <button class="app" type="button" aria-label="Application menu"><svg viewBox="0 0 34 34"><path d="M6 5l8-2 8 5v6l-4 3 4 2v4l-9 4-7-1z" fill="#0d6f70"/><path d="M6 5l8-2 8 5-7 2z" fill="#28a09c"/><path d="M6 26l9-8 7 1-9 8z" fill="#0a5458"/><path d="M6 5l6 10-6 3z" fill="#1b8a88"/><path d="M26 15h6l-3 3z" fill="#222"/></svg></button>
  <div class="quick">
    <svg viewBox="0 0 170 20"><path d="M5 4h10l5 4v8H5zM31 16V5h6l2 2h7v3M31 16l5-7h11l-4 7zM57 3h12v14H57zM60 3v5h7V3M60 17v-5h7v5M84 9l5-5v3h8v8M84 9l5 5v-3h5M108 9h3M132 9l-5-5v3h-8v8M132 9l-5 5v-3h-5M144 9h3M158 3h8v11h-8zM162 14v3h9V7h-5"/></svg>
    <span>Workspace: Default</span>
    <svg class="push" viewBox="0 0 12 20" style="width:12px"><path d="M1 6h9M2 10l4 4 4-4z" stroke="#d9bd5c" fill="#d9bd5c"/></svg>
  </div>
  <h1>Autodesk 3ds Max  2014 x64      stt-PRIMER.max</h1>
  <div class="info"><i></i><svg viewBox="0 0 150 20"><path d="M10 16V8l3-5h2v13zM18 16V3h3l3 5v8zM36 4a4 4 0 1 1 2 7l8 6M60 16h14M64 10l8-5v9M84 8h5l2-5 2 5h5l-4 3 2 6-5-4-5 4 2-6z"/><circle cx="127" cy="10" r="7"/><path d="M142 10h3"/></svg></div>
  <caption-buttons maximized></caption-buttons>
`);

define('main-toolbar', `
  :host { display: flex; align-items: center; height: 33px; padding: 0 0 4px 3px; background: #444; font: 9px "DejaVu Sans Condensed", sans-serif; --cell: 27px; --box: 24px; }
  .grip { width: 3px; height: 26px; border: solid #2a2a2a; border-width: 0 1px; }
  drop-down { height: 17px; align-self: flex-start; margin-top: 4px; }
  .view { width: 58px; }
  .sets { width: 98px; --field: #565656; --ink: #1c1c1c; }
  .end { height: 28px; margin-left: 8px; }
`, `
  <div class="grip"></div>
  ${bar('link unlink waves |')}
  <drop-down class="view" label="Selection filter" value="Geometr"></drop-down>
  <span style="width:1px"></span>
  ${bar('pick* list region^ crossing | move rotate scale^')}
  <drop-down class="view" label="Reference coordinate system" value="View"></drop-down>
  ${bar('pivot^ | manip keys | snap^ angle percent spinner | named')}
  <drop-down class="sets" label="Named selection sets" value="Create Selection Se"></drop-down>
  ${bar('| mirror align^ | layers | ribbon curve schematic | material^ | rsetup rframe render^')}
  <tool-sep class="end"></tool-sep>
`);

/** Expands "move rotate* | scale^" into buttons and separators (* active, ^ flyout). */
function bar(spec) {
  return spec.split(' ').map(s => s === '|'
    ? '<tool-sep></tool-sep>'
    : `<tool-button icon="${s.replace(/[*^]/g, '')}"${s.includes('*') ? ' active' : ''}${s.includes('^') ? ' fly' : ''}></tool-button>`).join('');
}

/* ---------- viewport ---------- */

const HEAD = [
  // fill, polygon
  ['#d4d4d4', '75,90 95,97 327,143 323,214 108,174 75,177'],
  ['#d9d9d9', '327,143 482,282 479,305 323,214'],
  ['#dedede', '75,177 108,174 323,214 117,300 75,290'],
  ['#e6e6e6', '108,174 323,214 331,322 117,300'],
  ['#dcdcdc', '323,214 479,305 331,322'],
  ['#cfcfcf', '331,322 479,305 473,373 325,461'],
  ['#ffffff', '117,300 331,322 122,442'],
  ['#f5f5f5', '331,322 325,461 122,442'],
  ['#f0f0f0', '75,290 117,300 122,442 75,428'],
  ['#c9c9c9', '473,373 325,461 455,490'],
  ['#8f8f8f', '482,282 513,477 473,373'],
  ['#a8a8a8', '473,373 513,477 455,490'],
  ['#dfdfdf', '122,442 325,461 122,584'],
  ['#cdcdcd', '325,461 307,591 122,584'],
  ['#c4c4c4', '75,428 122,442 122,584 75,570'],
  ['#bdbdbd', '325,461 455,490 307,591'],
  ['#b4b4b4', '455,490 432,603 307,591'],
  ['#a4a4a4', '455,490 513,477 516,533 498,611 432,603'],
  ['#a9a9a9', '75,570 122,584 307,591 273,711 118,702 75,705'],
  ['#a0a0a0', '307,591 432,603 391,712 273,711'],
  ['#8c8c8c', '432,603 498,611 463,686 391,712'],
  ['#a2a2a2', '75,705 118,702 273,711 241,830 110,825 75,810'],
  ['#8e8e8e', '273,711 391,712 345,822 241,830'],
  ['#838383', '391,712 463,686 445,722 391,804 345,822'],
  ['#d6d6d6', '110,825 241,830 247,924 110,927'],
  ['#cccccc', '75,810 110,825 110,927 75,924'],
  ['#bfbfbf', '241,830 345,822 328,919 247,924'],
  ['#979797', '345,822 391,804 355,921 328,919'],
  ['#fbfbfb', '75,924 247,924 248,1032 262,1118 340,1226 425,1291 126,1300 75,1320'],
  ['#d2d2d2', '247,924 328,919 342,1027 359,1113 262,1118 248,1032'],
  ['#8b8b8b', '328,919 355,921 367,1021 342,1027'],
  ['#a6a6a6', '342,1027 367,1021 397,1104 359,1113'],
  ['#e2e2e2', '262,1118 359,1113 500,1204 425,1291 340,1226'],
  ['#c2c2c2', '359,1113 397,1104 551,1189 500,1204'],
  ['#ffffff', '126,1300 425,1291 686,1521'],
  ['url(#arm)', '500,1204 551,1189 827,1273 686,1521 425,1291'],
  ['#e8e8e8', '516,507 541,512 570,563 491,650 498,611'],
  ['#cdcdcd', '570,563 556,638 491,650'],
  ['#9a9a9a', '491,650 556,638 508,702 463,686']
];
const VERTS = '108,174 117,300 122,442 122,584 118,702 110,825 110,927 112,1036 118,1114 123,1225 327,143 323,214 331,322 325,461 307,591 273,711 241,830 247,924 248,1032 262,1118 340,1226 425,1291 482,282 479,305 473,373 455,490 432,603 391,712 345,822 328,919 342,1027 359,1113 500,1204 513,477 516,533 498,611 463,686 391,804 355,921 367,1021 551,1189 556,638 508,702 491,650 541,512 570,563 827,1273 813,1301';

define('perspective-view', `
  :host { display: block; min-height: 0; border: 1px solid #7a6a2a; background: linear-gradient(#1b1b1b, #4c4c4c); }
  svg { width: 100%; height: 100%; }
  path, polygon { vector-effect: non-scaling-stroke; }
`, `
  <svg viewBox="43 81 1357 737" preserveAspectRatio="none" role="img" aria-label="Perspective viewport">
    <defs><linearGradient id="arm" x1=".3" y1="1" x2=".6" y2="0"><stop offset="0" stop-color="#f4f4f4"/><stop offset=".7" stop-color="#dadada"/><stop offset="1" stop-color="#777"/></linearGradient></defs>
    <path d="M43 117h20" stroke="#555"/>
    <path d="M736 818l26-16h638v16z" fill="#000"/>
    <path d="M44 797h20" stroke="#a02020"/><path d="M64 790v8" stroke="#2020a0"/>
    <g fill="none">
      <path d="M924 791l3 9 10-9 60 10 97-3" stroke="#2ce02c" stroke-width="2"/><path d="M924 791l3 9 8-9z" fill="#fff"/>
    </g>
    <path d="M1095 720h19v98h-19z" fill="#000"/>
    <g transform="matrix(.33333 0 0 .47193 1070 80)">
      <path d="M75 66L987 60M75 160L987 158M75 258L987 252M75 354L987 348M75 450L987 444M75 544L987 541M75 642L987 638M75 740L987 733M75 834L987 830M75 1026L987 1023M75 1122L987 1117M75 1216L987 1213M75 1312L987 1308M440 745L987 1250" fill="none" stroke="#565656" stroke-width=".8"/>
      <path d="M75 1315L126 1300 686 1521 784 1355 770 1487 600 1500 340 1526H75z" fill="#000"/>
      <path d="M133 1353L240 1345M280 1360L340 1525M98 1392h36L340 1525M720 1465l50 20M735 1455l35 32M133 1540v24" fill="none" stroke="#d8d8d8" stroke-width=".8"/>
      <path d="M784 1355L770 1487 600 1500 340 1526H133" fill="none" stroke="#28c828" stroke-width="1.500"/>
      ${HEAD.map(([fill, pts]) => `<polygon points="${pts}" fill="${fill}" stroke="${fill}" stroke-width=".6"/>`).join('')}
      <path d="M95 90L327 143V214L331 322 325 461 307 591 273 711 241 830 247 924 248 1032 262 1118M75 177L108 174 327 143M108 174L323 214 117 300 75 290M323 214L479 305 331 322 117 300M331 322L122 442 75 428M331 322L473 373 479 305M473 373L325 461 122 442M325 461L122 584 307 591 455 490 325 461M473 373L455 490 432 603 391 712 345 822 328 919 342 1027 359 1113 500 1204M473 373L513 477 455 490 498 611 432 603 307 591 391 712 273 711 432 603 516 533 455 490M122 584L273 711 118 702M75 570L122 584 75 622M75 705L118 702M307 591L463 686 391 712 241 830 110 825 273 711M118 702L75 760M75 810L110 825M241 830L345 822 391 804 328 919 247 924H75M345 822L463 686M241 830L328 919 355 921M110 927L241 830M345 822L445 700M328 919L248 1032 342 1027 367 1021M328 919L367 1021M248 1032L359 1113 262 1118M359 1113L397 1104M262 1118L500 1204M359 1113L551 1189M397 1104L359 1113M500 1204L827 1273 551 1189M500 1204L813 1301M479 305L482 282 327 143 479 305M479 305L505 450M327 143L323 214M498 611L570 563 491 650 556 638 508 702 491 650 463 686 498 611 516 507 541 512M432 603L463 686" fill="none" stroke="#fff" stroke-width="1"/>
      <path d="M95 97L108 174 117 300 122 442 122 584 118 702 110 825 110 927 112 1036 118 1114 123 1225 126 1300M75 90L327 143 482 282 513 477M541 512L570 563 556 638 508 702 445 722M463 690L391 804 355 921 367 1021 397 1104 551 1189 500 1204 425 1291 686 1521M75 1225L340 1227 500 1204M75 1299L126 1300 425 1291M75 1320L126 1300 686 1521 827 1273" fill="none" stroke="#1fe01f" stroke-width="2"/>
      ${VERTS.split(' ').map(p => { const [x, y] = p.split(','); return `<path d="M${x - 4} ${y - 3}h8v6h-8z" fill="#4444d0"/>`; }).join('')}
    </g>
    <g><ellipse cx="1354" cy="141" rx="27" ry="5" fill="none" stroke="#7b7c80" stroke-width="4"/><path d="M1341 113l26 1v26l-25 1z" fill="#7d7f86"/><path d="M1341 113h25l3 2v24l-2 1V114z" fill="#5c5e66"/>
    <text x="1346" y="130" font-size="6" font-weight="700" font-family="Liberation Sans, sans-serif" fill="#5a5b62">BACK</text></g>
  </svg>
`);

/* ---------- UV canvas ---------- */

/** Rings of triangles between two ellipse radii, used for the eyes, nose and mouth. */
function rings(cx, cy, radii, n) {
  let d = '';
  const at = (r, k) => {
    const a = (k / n) * Math.PI * 2;
    return `${Math.round(cx + Math.cos(a) * r[0])} ${Math.round(cy + Math.sin(a) * r[1])}`;
  };
  radii.forEach((r, i) => {
    for (let k = 0; k < n; k++) {
      d += `M${at(r, k + i / 2)}L${at(r, k + 1 + i / 2)}`;
      if (i) d += `M${at(radii[i - 1], k + (i - 1) / 2)}L${at(r, k + i / 2)}L${at(radii[i - 1], k + 1 + (i - 1) / 2)}`;
    }
  });
  return d;
}

const SIDE_OUT = 'M150 178L145 80 421 118 603 208 689 332 696 462 664 586 575 706 494 804 483 843 477 878 594 959 477 992 204 1021 86 947 107 832 178 718 125 660 240 568 254 540 250 510 217 470 250 480 312 428 270 399 190 381';
const SIDE_IN = `M150 178L421 118 336 202 603 208 465 268 689 332 540 368 696 462 555 480 664 586 520 590 575 706 425 711 494 804 372 808 483 843M150 178L336 202 286 278 465 268 383 323 540 368 445 406 555 480 437 500 520 590 400 600 425 711 308 715 178 718M150 178L286 278 190 381M286 278L383 323 445 406 437 500 400 600 289 607M286 278L265 396 383 323 312 428 445 406 336 475 437 500 312 530 289 607 308 715 263 830 110 830 308 715M336 202L465 268 540 368 555 480 520 590 575 706M312 428L336 475 301 498 250 482 263 600 301 498 289 607 263 604 140 681 289 607M312 428L301 498M336 475L312 530 263 604M437 500L289 607 150 640 140 681M289 607L178 718M240 568L263 600 336 475M445 406L437 500M520 590L425 711 400 600M263 830L372 808 425 711 263 830 360 862 372 808M263 830L262 927 360 862 483 843 352 912 262 927 255 885 110 830M93 902L255 885 483 843M86 947L255 885M86 947L262 927 204 1019M262 927L365 1000 352 912 477 878 477 992 352 912 360 862M664 586L400 600M696 462L520 590M289 607L520 590M555 480L336 475`;

const FACE_OUT = 'M1227 197L1128 108 1000 60 980 143 950 225 935 320 966 353 944 362 935 390 940 425 968 458 985 470 964 486 984 530 1000 586 1085 606 1134 641 1163 615 1227 580';
const FACE_IN = `M1000 60L1085 175 980 143 1027 247 950 225M1128 108L1085 175 1153 240 1128 108M1153 240L1227 197M1000 60L1128 108M1085 175L1027 247 935 320M1085 175L1090 280 1027 247 1055 337 966 353M1090 280L1153 240 1106 341 1055 337 1090 280 1106 341M1090 280L935 320 1055 337 1031 382 966 353 984 411 1031 382 1115 375 1055 337M1153 240L1180 290 1227 268 1153 240M1153 240L1227 225M1180 290L1106 341M1031 382L1070 458 984 411 968 458 1147 460 1070 458 1115 375 1147 433M1147 433L1070 458 1024 520 968 458 985 530 1024 520 1122 543 1070 458M984 411L944 362M984 411L968 458M1070 458L1060 510 1122 543 1185 485 1147 433 1122 543M1024 520L1000 586 1060 540 1122 543 1085 606 1024 520M1122 543L1134 641 1163 615 1122 543 1227 570 1163 615M1122 543L1200 530 1227 570M966 353L1115 375M1031 382L1147 433M1024 520L985 470M1060 540L1085 606M1115 375L1147 433 1227 400M1147 460L1227 460M1180 290L1227 310 1200 340 1106 341M1200 340L1227 400 1190 400 1147 433M1180 290L1200 340M1190 400L1200 340M1190 400L1185 485M1147 433L1180 460M1190 400L1110 341`;
const DENSE = rings(1160, 358, [[28, 14], [38, 24], [50, 36]], 12) + rings(1227, 440, [[10, 8], [20, 20], [32, 32], [46, 44]], 12)
  + rings(1227, 484, [[42, 8], [52, 22], [66, 42]], 14) + 'M1227 197V580M1200 290L1227 340 1254 290M1190 310H1264M1180 330L1274 350M1190 385L1264 405';

define('uv-canvas', `
  :host { display: block; min-width: 0; background: #3b3b3b; overflow: hidden; }
  svg { width: 100%; height: 100%; }
`, `
  <svg viewBox="60 151 893 583" preserveAspectRatio="xMinYMin slice" role="img" aria-label="UV layout">
    <defs>
      <pattern id="chk" patternUnits="userSpaceOnUse" x="221.300" y="230.300" width="93.100" height="46.600">
        <rect width="93.100" height="46.600" fill="#919191"/><path d="M46.550 0h46.550v23.300H46.550zM0 23.300h46.550v23.300H0z" fill="#cbcbcb"/>
      </pattern>
      <g id="side" fill="none" stroke-width="3"><path d="${SIDE_IN}" stroke="#f4f4f4" stroke-width="2.600"/><path d="${SIDE_OUT}" stroke="#3dca3d"/></g>
      <g id="half"><path d="${FACE_IN}" stroke="#f4f4f4" stroke-width="2.400"/><path d="${FACE_OUT}" stroke="#3dca3d"/></g>
    </defs>
    <path d="M221 151v81" stroke="#444"/>
    <rect x="221" y="232" width="800" height="463" fill="url(#chk)"/>
    <g transform="matrix(.33333 0 0 .33333 270 230)" fill="none" stroke-width="3">
      <use href="#side"/>
      <path d="M150 178L190 381" stroke="#2a2ac0" stroke-width="4"/>
      <use href="#side" x="1692"/>
      <path d="M1842 178L1882 381" stroke="#3dca3d"/>
      <use href="#half"/>
      <use href="#half" transform="matrix(-1 0 0 1 2454 0)"/>
      <path d="${DENSE}" stroke="#f4f4f4" stroke-width="2"/>
      <path d="${rings(1294, 358, [[28, 14], [38, 24], [50, 36]], 12)}" stroke="#f4f4f4" stroke-width="2"/>
      <ellipse cx="1159" cy="360" rx="26" ry="10" fill="#5aa664" stroke="#3dba3d"/>
      <ellipse cx="1295" cy="358" rx="25" ry="9" fill="#a8dca8" stroke="#3dba3d"/>
      <path d="M1182 484q45-18 86 0z" fill="#66c466" stroke="#28b828"/>
      <path d="M980 143L950 227" stroke="#c81818" stroke-width="5"/>
      <g stroke="#e8603a"><path d="M912 143h105v85H912zM964 143v85M912 185h105"/>
      <path d="M905 136h15v15h-15zM957 136h15v15h-15zM1010 136h15v15h-15zM905 178h15v15h-15zM1010 178h15v15h-15zM905 221h15v15h-15zM957 221h15v15h-15zM1010 221h15v15h-15z"/></g>
    </g>
    <g fill="none">
      <path d="M579 151l13 27 6-3 31-2 8 29 34 2-24-33 1-20" stroke="#28c028"/>
      <path d="M583 155l10 20 10-24 14 10 8-10 5 14 20-14M593 175l18-10 22 11 12-25M592 154l6 20 20-22M611 165l4-12 22 8M633 176l-5-24M633 176l16-5-12 30 20-18M637 161l12 10M611 165l30-14M649 171l-4-20" stroke="#f0f0f0"/>
      <circle cx="111" cy="335" r="6" stroke="#28c028"/><circle cx="111" cy="351" r="6" stroke="#28c028"/>
      <path d="M111 329v12M105 335h12M107 331l8 8M115 331l-8 8M111 345v12M105 351h12M107 347l8 8M115 347l-8 8" stroke="#eee"/>
      <path d="M126 428l7 5-4 11 4 8-4 9 5 12-6 4-7-4 4-12-3-9 3-8-3-11z" stroke="#28c028"/>
      <path d="M124 431l6 8-5 6 6 8-6 8 6 8-6 6M130 432l-5 10 6 10-6 10 6 12M122 452h11M125 440h6M125 462h7M122 434l9 2M123 471l10-4" stroke="#eee"/>
      <path d="M277 734l-2-4 60 3 30 1" stroke="#28c028"/><path d="M275 730l55 4" stroke="#eee"/>
    </g>
  </svg>
`);

/* ---------- Edit UVWs window ---------- */

define('uvw-window', `
  :host { display: flex; flex-direction: column; background: #444; border: solid #efc76a; border-width: 0 7px 7px; font: 9px "DejaVu Sans Condensed", sans-serif; color: #ccc; --cell: 24px; --sep: #aaa; }
  header { flex: none; display: flex; height: 32px; background: #efc76a; font-family: "Open Sans", sans-serif; color: #33301f; }
  h2 { flex: 1; margin: 0; padding-left: 84px; font-size: 15px; font-weight: 400; line-height: 30px; text-align: center; }
  header > svg { width: 17px; height: 17px; margin: 8px 0 0 1px; }
  caption-buttons { --close: 47px; }
  menu-bar { flex: none; height: 21px; padding-left: 6px; background: #f5f5f7; color: #1c1c1c; font: 12px "Open Sans", sans-serif; --menu-gap: 12px; }
  .tools { flex: none; height: 24px; }
  .tools tool-sep { margin: 0 3px 4px 4px; }
  .tools span { width: 26px; font: 13px "Open Sans", sans-serif; text-align: center; }
  .tools drop-down { width: 141px; height: 18px; margin: 0 13px 0 0; }
  .middle { flex: 1; min-height: 0; display: flex; border-top: 1px solid #555; }
  uv-canvas { flex: 1; margin-left: 1px; }
  uvw-panel { flex: none; width: 134px; }
  .foot { flex: none; height: 26px; border-top: 1px solid #5c5c5c; --cell: 23px; }
  .foot .push { padding-right: 2px; }
  .foot.two { padding-left: 1px; --cell: 24px; }
  .foot.two .push { padding-right: 0; }
  .foot drop-down { width: 115px; height: 18px; }
  .foot tool-sep { margin: 0 1px 6px 4px; }
  .foot spin-box { margin-right: 8px; align-self: flex-start; margin-top: 4px; }
  .foot.two tool-sep { margin-right: 0; }
  .xy { font: 13px "Open Sans", sans-serif; width: 24px; text-align: center; }
`, `
  <header>
    <svg viewBox="0 0 24 24"><rect width="24" height="24" fill="#d4ecec"/><path d="M5 1l12 3-2 7 3 4-9 4-6-2z" fill="#0f7072"/><path d="M3 17h18v6H3z" fill="#3aa8b0"/></svg>
    <h2>Edit UVWs</h2>
    <caption-buttons></caption-buttons>
  </header>
  <menu-bar items="File,Edit,Select,Tools,Mapping,Options,Display,View"></menu-bar>
  <div class="tools row">
    ${bar('move^ rotate scaleb^ freeform* | mirror2^')}
    <div class="row push">${bar('checker*')}<span>UV</span>${bar('props')}
    <drop-down label="Background" value="CheckerPattern  ( Checker )"></drop-down></div>
  </div>
  <div class="middle"><uv-canvas></uv-canvas><uvw-panel></uvw-panel></div>
  <div class="foot row">
    ${bar('points edge* face | element | grow shrink loop loopadd loopsub ring ringadd ringsub brush brushbig brushsmall')}
    <div class="row push">${bar('falloff')}<spin-box style="--w:32px" value="0,0"></spin-box>${bar('line^')}<span class="xy">XY</span>${bar('| soft*')}<spin-box style="--w:18px" value="16"></spin-box></div>
  </div>
  <div class="foot two row">
    ${bar('absolute |')}
    <spin-box>U:&nbsp;&nbsp;&nbsp;</spin-box><spin-box>V:&nbsp;&nbsp;&nbsp;</spin-box><spin-box value="0,0">W:&nbsp;</spin-box><tool-sep></tool-sep>
    <div class="row push">${bar('lock filter | bulbs^ freeze^ |')}<drop-down label="Material IDs" value="All IDs"></drop-down>${bar('hand zoom zoomreg zoomext^ gridsnap^')}</div>
  </div>
`);

define('uvw-panel', `
  :host { display: block; overflow: hidden; background: #444; border-left: 2px solid #2a2a2a; padding-top: 5px; --cell: 23px; --box: 23px; --gap: 7px; }
  roll-out { width: 150px; }
  .mid { justify-content: center; padding-right: 10px; height: 37px; }
  .wide { padding-right: 20px; }
  .quick { height: 67px; padding-left: 1px; }
  .quick > tool-button { margin-bottom: 8px; }
  .quick .grid { display: grid; grid-template-columns: repeat(3, 23px); row-gap: 8px; margin-left: 7px; }
  .quick hr { height: 60px; margin: 0 0 0 20px; border: 0; border-left: 1px solid #777; }
  .explode { height: 34px; padding: 8px 0 0 6px; align-items: flex-start; }
  .weld { padding: 0 0 2px 4px; height: 38px; }
  .weld spin-box { flex-wrap: wrap; row-gap: 4px; width: 60px; margin-left: 22px; align-self: flex-start; }
  .weld spin-box span { width: 60px; line-height: 13px; }
  .pad { line-height: 11px; }
  group-box { margin: 0 6px 4px; }
  .detach { height: 57px; padding: 5px 0 0 25px; }
  .detach check-box { height: 18px; padding: 2px 0 0 1px; --gap: 9px; }
  .detach .row { margin: 2px 0 0 -7px; }
  .pins { height: 36px; padding: 3px 0 0 4px; }
  .pins tool-sep { margin: 0 4px 10px 3px; }
  .arrange { display: flex; height: 93px; gap: 12px; padding: 3px 0 0 4px; }
  .arrange .col { display: grid; row-gap: 10px; align-content: center; }
  .arrange group-box { flex: 1; margin: 0 -1px 4px 0; }
  .arrange .in { display: flex; height: 85px; gap: 11px; padding-left: 4px; }
  .opts { display: flex; flex-direction: column; gap: 8px; padding-top: 9px; }
`, `
  <roll-out heading="Quick Transform"><div class="row quick">
    ${bar('center^')}<div class="grid">${bar('alignv^ linear rotcw alignh^ edgealign rotccw')}</div><hr>
    <div class="grid">${bar('spaceh')}<i></i><i></i>${bar('spacev')}</div>
  </div></roll-out>
  <roll-out heading="Reshape Elements"><div class="row mid">${bar('straighten relaxl relax^')}</div></roll-out>
  <roll-out heading="Stitch"><div class="row mid wide">${bar('st1 st2 st3 st4^')}</div></roll-out>
  <roll-out heading="Explode">
    <div class="row explode">${bar('basket ex1 ex2 ex3 ex4^')}</div>
    <group-box heading="Weld"><div class="row weld">${bar('target weld^')}
      <spin-box value="0,01"><span>Threshold:</span></spin-box></div></group-box>
  </roll-out>
  <roll-out heading="Peel">
    <group-box style="margin:7px -1px 0 10px"><div class="detach"><check-box checked ink="#111">Detach</check-box><div class="row">${bar('peel1 peel2 undo')}</div></div></group-box>
    <group-box heading="Pins:" style="margin-left:10px;margin-right:-1px"><div class="row pins">${bar('pin pinx pinauto* | pinsel')}</div></group-box>
  </roll-out>
  <roll-out heading="Arrange Elements"><div class="arrange">
    <div class="col">${bar('pack^ cabinets')}</div>
    <group-box><div class="in"><div class="col">${bar('packsmall packfit')}</div>
      <div class="opts"><check-box checked>Rescale</check-box><check-box>Rotate</check-box><span class="pad">Padding:</span><spin-box value="0,02" style="--w:30px"></spin-box></div></div></group-box>
  </div></roll-out>
  <roll-out heading="Element Properties"></roll-out>
`);

/* ---------- command panel ---------- */

define('command-panel', `
  :host { display: flex; flex-direction: column; overflow: hidden; background: #444; padding-left: 2px; font: 9px "DejaVu Sans Condensed", sans-serif; color: #ccc; --cell: 24px; --box: 20px; }
  .tabs { height: 23px; padding-left: 1px; border-bottom: 1px solid #2a2a2a; flex: none; }
  .tabs tool-button { border: 1px solid #222; border-bottom: 0; border-radius: 4px 4px 0 0; background: #3a3a3a; height: 21px; align-self: flex-end; --box: 18px; }
  .tabs tool-button:nth-child(2) { background: #4c4c4c; height: 22px; }
  .name { flex: none; padding: 5px 4px 0 10px; gap: 5px; }
  .name input { flex: 1; min-width: 0; height: 19px; padding: 0 2px 3px; background: #565656; border: 1px solid #1d1d1d; border-width: 2px 1px 1px 2px; }
  .name button { width: 17px; height: 18px; background: #e4e4e4; }
  drop-down { height: 22px; margin: 7px 5px 0 10px; --field: #565656; --ink: #ccc; }
  ul { flex: none; height: 105px; margin: 4px 8px 0 10px; padding: 0; list-style: none; background: #565656; border: 1px solid #e0e0e0; }
  li { display: flex; align-items: center; gap: 5px; height: 13px; padding-left: 5px; border-bottom: 1px solid #6a6a6a; color: #ddd; }
  li.on { background: #3c7cd4; color: #fff; }
  li svg { width: 8px; height: 10px; flex: none; }
  li .bulb { margin: 0 2px; }
  li .dots { width: 12px; margin: 0 6px 0 auto; }
  .stack { height: 36px; padding: 0 9px 7px; --cell: 19px; --box: 18px; flex: none; }
  .stack tool-sep { margin: 0 5px 0 3px; }
  .scroll { flex: 1; min-height: 0; display: flex; border-top: 2px solid #1c1c1c; margin: 2px 5px 0 0; }
  .rolls { flex: 1; min-width: 0; overflow: hidden; padding: 3px 2px 0 4px; border-top: 1px solid #1c1c1c; margin-top: 5px; --gap: 6px; }
  .bar { width: 3px; margin-top: 6px; background: linear-gradient(#0c0c0c 51%, #d0d0d0 51%); }
  group-box { display: block; margin: 0 5px; }
  .sel { height: 39px; padding: 2px 0 0 10px; --box: 22px; }
  .mod { height: 44px; padding: 0 0 4px 6px; --box: 22px; }
  .select-by { padding: 5px 0 3px; }
  .by { height: 33px; padding: 0 3px; --box: 22px; }
  .by spin-box { align-self: flex-start; margin: 4px 3px 0 0; }
  .wide { display: block; width: 156px; height: 27px; margin: 4px auto 0; }
  .btn { color: #c4c4c4; border: 1px solid #585858; border-right-color: #222; border-bottom-color: #222; }
  .uvs { height: 61px; padding: 0 34px 8px 0; justify-content: center; --box: 22px; }
  .ch { display: grid; grid-template-columns: 1fr 1fr; gap: 1px 4px; padding: 2px 8px 1px 6px; }
  .ch .btn { height: 24px; }
  .ch .btn:last-child { grid-column: 2; }
  .radios { height: 57px; padding: 5px 6px 0; }
  .radios .row { justify-content: space-between; height: 22px; padding-right: 6px; }
  .peel { height: 40px; padding: 14px 0 0 24px; }
`, `
  <div class="row tabs">${bar('create modify hierarchy motion display hammer')}</div>
  <div class="row name"><input aria-label="Object name" value="body__LOD1"><button type="button" aria-label="Object color"></button></div>
  <drop-down label="Modifier list" value="Modifier List"></drop-down>
  <ul>
    ${[['Unwrap UVW', true, ' class="on"'], ['Skin', true, ''], ['Editable Mesh', false, '']].map(([name, bulb, cls]) => `<li${cls}>
      ${bulb ? '<svg class="bulb" viewBox="0 0 8 10"><circle cx="4" cy="3" r="3" fill="#fff"/><circle cx="4" cy="3" r="1" fill="#888"/><path d="M3 6h2v4H3z" fill="#ddd"/></svg>' : ''}
      <svg viewBox="0 0 8 8"><path d="M0 0h8v8H0z" fill="#111"/><path d="M2 4h4M4 2v4" stroke="#ddd"/></svg>${name}
      <svg class="dots" viewBox="0 0 12 10"><path d="M1 4h2v2H1zM5 8h2v2H5zM9 0h2v2H9z" fill="#111"/></svg></li>`).join('')}
  </ul>
  <div class="row stack">${bar('pinstack | tube | unique trash | config')}</div>
  <div class="scroll">
    <div class="rolls">
      <roll-out heading="Selection">
        <div class="row sel">${bar('points edge* face')}<span style="width:24px"></span>${bar('element')}</div>
        <group-box heading="Modify Selection:"><div class="row mod">${bar('grow shrink')}<span style="width:24px"></span>${bar('loop ring')}</div></group-box>
        <group-box heading="Select By:" style="margin:2px 5px 4px"><div class="select-by"><div class="row by">${bar('byelem* redline')}<span style="width:11px"></span>${bar('planar')}<spin-box value="0,0"></spin-box></div>
        <div class="row by">${bar('smooth')}<spin-box value="0" style="--w:22px"></spin-box>${bar('matid')}<spin-box value="0" style="--w:22px"></spin-box></div></div></group-box>
      </roll-out>
      <roll-out heading="Edit UVs">
        <button class="btn wide" type="button">Open UV Editor ...</button>
        <button class="btn wide" type="button">Tweak In View</button>
        <div class="row uvs">${bar('quick1 quick2 quick3^')}</div>
      </roll-out>
      <roll-out heading="Channel">
        <div class="ch"><button class="btn" type="button">Reset UVWs</button><button class="btn" type="button">Save...</button><button class="btn" type="button">Load...</button></div>
        <group-box heading="Channel:" style="margin:0 8px 17px 6px"><div class="radios">
          <div class="row"><check-box type="radio" checked>Map Channel:</check-box><spin-box value="1" style="--w:36px;--h:16px"></spin-box></div>
          <div class="row"><check-box type="radio">Vertex Color Channel</check-box></div></div></group-box>
      </roll-out>
      <roll-out heading="Peel"><div class="row peel">${bar('peel1 peel2 undo pelt')}</div></roll-out>
    </div>
    <div class="bar"></div>
  </div>
`);

/* ---------- time line and status ---------- */

define('time-line', `
  :host { display: block; background: #444; font: 9px "DejaVu Sans Condensed", sans-serif; color: #ccc; }
  .slider { height: 16px; border-bottom: 1px solid #1c1c1c; }
  .slider button { height: 14px; width: 13px; }
  .slider .knob { width: 105px; border: 1px solid #1c1c1c; border-left-color: #666; }
  .track { display: flex; height: 24px; }
  .cfg { width: 40px; padding: 2px 9px; }
  .cfg ui-icon { width: 17px; height: 17px; }
  ol { flex: 1; margin: 0 7px 0 0; padding: 0; list-style: none; display: grid; grid-template-columns: repeat(101, minmax(0, 1fr)); background: #2b2b2b; }
  li { min-width: 0; display: flex; flex-direction: column; align-items: center; }
  li::before { content: ""; width: 1px; height: 10px; background: #606060; flex: none; }
  li span { font-size: 10px; line-height: 13px; }
  li:first-child { background: linear-gradient(#9a9020, #7a7010) center / 6px 100% no-repeat; color: #ffec60; }
  .fill { width: 32px; }
`, `
  <div class="row slider"><button type="button">&lt;</button><button class="knob" type="button">0 / 100</button><button type="button">&gt;</button></div>
  <div class="track"><div class="cfg"><ui-icon name="trackcfg"></ui-icon></div><ol></ol><div class="fill"></div></div>
`, (el, root) => {
  const ol = root.querySelector('ol');
  for (let frame = 0; frame <= 100; frame++) {
    const li = document.createElement('li');
    if (frame % 5 === 0) li.innerHTML = `<span>${frame}</span>`;
    ol.appendChild(li);
  }
});

define('status-bar', `
  :host { display: flex; gap: 4px; height: 40px; background: #444; border-bottom: 1px solid #c9ab66; font: 9px "DejaVu Sans Condensed", sans-serif; color: #ccc; --cell: 21px; --box: 16px; }
  .script { width: 82px; padding: 2px 3px; display: grid; grid-template-rows: 17px 1fr; gap: 1px; }
  .script input { width: 100%; border: 1px solid #999; background: #dcc3c6; }
  .script input + input { background: #fff; color: #111; font: 12px "Liberation Mono", monospace; padding-left: 3px; }
  .rows { flex: 1; min-width: 0; display: grid; grid-template-rows: 1fr 1fr; gap: 2px; }
  .rows .row { gap: 1px; }
  .msg { flex: 1; line-height: 17px; padding-left: 5px; border: 1px solid #222; border-right-color: #555; border-bottom-color: #555; }
  .coord { --w: 48px; --h: 18px; }
  .coord + .coord { margin-left: 11px; }
  .cell { width: 83px; height: 18px; line-height: 17px; padding-left: 4px; border: 1px solid #222; border-bottom-color: #555; margin-left: 12px; }
  .btn { border: 1px solid #585858; border-right-color: #1c1c1c; border-bottom-color: #1c1c1c; }
  .key { width: 37px; margin: 1px 0; }
  .key ui-icon { width: 22px; height: 22px; margin: auto; }
  .auto { display: grid; grid-template: 19px 18px / 40px 96px; gap: 1px 3px; padding-top: 1px; margin-left: -2px; }
  drop-down { height: 18px; }
  .filters { display: grid; grid-template-columns: 21px 1fr; }
  .play { display: grid; grid-template-columns: repeat(9, 20px); grid-template-rows: 20px 18px; align-items: center; margin-right: 4px; --cell: 20px; --box: 18px; }
  .play spin-box { grid-column: span 3; --w: 52px; --h: 17px; }
`, `
  <div class="script"><input aria-label="Macro recorder"><input aria-label="Listener" value="Welcome to M"></div>
  <div class="rows">
    <div class="row"><div class="msg">1 Object Selected</div><span style="width:1px"></span>${bar('redpin lock absolute')}&nbsp;
      <spin-box class="coord" plain>X:</spin-box><spin-box class="coord" plain>Y:</spin-box><spin-box class="coord" plain>Z:</spin-box><div class="cell">Grid = 0,254m</div></div>
    <div class="row"><div class="msg">Select texture vertices</div>${bar('timetag*')}<div class="cell" style="margin-left:0">Add Time Tag</div></div>
  </div>
  <button class="btn key" type="button" aria-label="Set keys"><ui-icon name="key"></ui-icon></button>
  <div class="auto"><button class="btn" type="button">Auto</button><drop-down label="Key set" value="Selected"></drop-down>
    <button class="btn" type="button">Set K.</button><div class="filters">${bar('redcurve^')}<button class="btn" type="button">Filters...</button></div></div>
  <div class="play">${bar('first prev play^ next last zoom zoomall ext^ extall^ keymode')}<spin-box value="0"></spin-box>${bar('timecfg regionz hand^ orbit^ maximize')}</div>
`);

define('max-app', `
  :host { display: flex; flex-direction: column; position: relative; height: 100vh; min-height: 700px; overflow: hidden; }
  title-bar, main-toolbar, status-bar { flex: none; }
  menu-bar { flex: none; height: 21px; padding-left: 47px; color: #eee; background: linear-gradient(#a2a2a2, #454545); font: 12px "Open Sans", sans-serif; --menu-gap: 21px; }
  .main { flex: 1; min-height: 0; display: flex; }
  .rail { width: 42px; display: flex; flex-direction: column; align-items: center; justify-content: flex-end; padding-bottom: 4px; background: linear-gradient(90deg, #3c3c3c, #2a2a2a); border-top: 6px solid #4c4c4c; }
  .rail button { width: 19px; height: 19px; margin-bottom: 13px; background: #4a4a4a; border-radius: 2px; display: grid; place-items: center; }
  .rail button svg { width: 8px; height: 9px; }
  .rail .tile { width: 38px; height: 46px; margin: 0; border-radius: 4px; background: linear-gradient(#4d6488, #3c80dc); align-self: flex-end; }
  .tile i { width: 30px; height: 28px; background: #59677c; border: 1px solid #32435e; }
  .center { flex: 1; min-width: 0; display: flex; flex-direction: column; }
  perspective-view { flex: 1; }
  command-panel { flex: none; width: 199px; }
  uvw-window { position: absolute; inset: 73px 505px 108px 52px; }
`, `
  <title-bar></title-bar>
  <menu-bar items="Edit,Tools,Group,Views,Create,Modifiers,Animation,Graph Editors,Rendering,Customize,MAXScript,Help"></menu-bar>
  <main-toolbar></main-toolbar>
  <div class="main">
    <div class="rail">
      <button type="button" aria-label="Expand"><svg viewBox="0 0 8 9"><path d="M1 0l6 4.500L1 9z" fill="#ddd"/></svg></button>
      <button type="button" class="tile" aria-label="Viewport layout"><i></i></button>
    </div>
    <div class="center"><perspective-view></perspective-view><time-line></time-line></div>
    <command-panel></command-panel>
  </div>
  <status-bar></status-bar>
  <uvw-window></uvw-window>
`);
</script>
</body>
</html>
